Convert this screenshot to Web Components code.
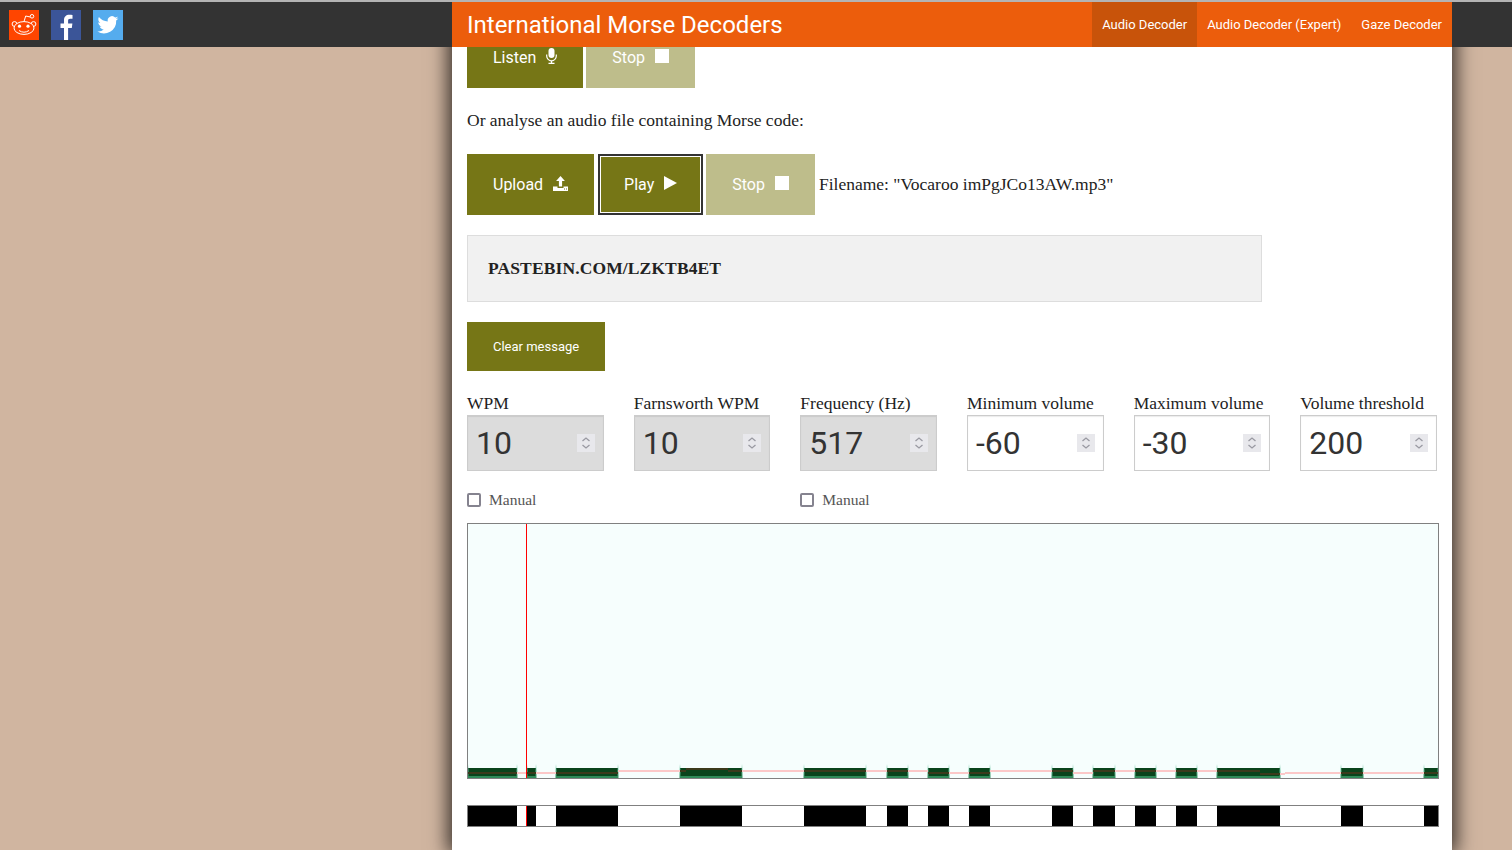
<!DOCTYPE html>
<html lang="en">
<head>
<meta charset="utf-8">
<title>International Morse Decoders</title>
<style>
  html, body { height: 100%; }
  body {
    margin: 0;
    overflow: hidden;
    background: #d0b5a0;
  }
</style>
</head>
<body>
<site-nav>
  <nav-link active>Audio Decoder</nav-link>
  <nav-link>Audio Decoder (Expert)</nav-link>
  <nav-link>Gaze Decoder</nav-link>
</site-nav>
<decoder-page>
  <section-row>
    <olive-button icon="mic">Listen</olive-button>
    <olive-button icon="stop" faded>Stop</olive-button>
  </section-row>
  <p class="lead" slot="lead">Or analyse an audio file containing Morse code:</p>
  <section-row slot="file">
    <olive-button icon="upload">Upload</olive-button>
    <olive-button icon="play" focused>Play</olive-button>
    <olive-button icon="stop" faded>Stop</olive-button>
    <file-name>Filename: "Vocaroo imPgJCo13AW.mp3"</file-name>
  </section-row>
  <message-box slot="message">PASTEBIN.COM/LZKTB4ET</message-box>
  <olive-button slot="clear" small>Clear message</olive-button>
  <settings-grid slot="settings">
    <number-field label="WPM" value="10" disabled manual></number-field>
    <number-field label="Farnsworth WPM" value="10" disabled></number-field>
    <number-field label="Frequency (Hz)" value="517" disabled manual></number-field>
    <number-field label="Minimum volume" value="-60"></number-field>
    <number-field label="Maximum volume" value="-30"></number-field>
    <number-field label="Volume threshold" value="200"></number-field>
  </settings-grid>
  <morse-wave slot="wave"></morse-wave>
</decoder-page>

<script>
const ICONS = {
  mic: '<svg width="11" height="16" viewBox="0 0 11 16"><rect x="2.500" y="0" width="6" height="10" rx="3" fill="#fff"/><path d="M.7 6.500v1.500a4.800 4.800 0 0 0 9.600 0V6.500" fill="none" stroke="#fff" stroke-width="1.200"/><path d="M5.500 13v2M2.500 15.300h6" stroke="#fff" stroke-width="1.300" fill="none"/></svg>',
  stop: '<svg width="14" height="14" viewBox="0 0 14 14"><rect width="14" height="14" fill="#fff"/></svg>',
  play: '<svg width="13" height="14" viewBox="0 0 13 14"><path d="M0 0l13 7-13 7z" fill="#fff"/></svg>',
  upload: '<svg width="15" height="15" viewBox="0 0 15 15"><path d="M7.500 0l4.400 5H9.100v5.500H5.900V5H3.100z" fill="#fff"/><path d="M0 10.500h4.500v1.500h6v-1.500H15V15H0z" fill="#fff"/><path d="M11 13h1M13 13h1" stroke="#767616" stroke-width="1"/></svg>',
};

class SiteNav extends HTMLElement {
  constructor() {
    super();
    this.attachShadow({ mode: 'open' }).innerHTML = `
      <style>
        :host {
          display: block;
          position: fixed;
          z-index: 10;
          top: 0;
          left: 0;
          right: 0;
          height: 47px;
          box-sizing: border-box;
          border-top: 2px solid #b4b4b4;
          background: #333;
          font-family: Roboto, sans-serif;
        }
        .wrap { display: flex; height: 100%; }
        .social {
          width: 452px;
          box-sizing: border-box;
          padding: 8px 0 0 9px;
          display: flex;
          gap: 12px;
          align-items: flex-start;
        }
        .social svg { display: block; }
        .brand {
          width: 1000px;
          background: #ec5d0c;
          display: flex;
          align-items: center;
          justify-content: space-between;
          height: 100%;
        }
        h1 {
          margin: 0 0 0 15px;
          font-size: 24px;
          font-weight: 400;
          color: #fff;
        }
        .links { display: flex; height: 100%; }
      </style>
      <div class="wrap">
        <div class="social">
          <svg width="30" height="30" viewBox="0 0 30 30">
            <rect width="30" height="30" fill="#ff4500"/>
            <g fill="none" stroke="#fff" stroke-width="1">
              <circle cx="5.500" cy="14" r="2.400" fill="#ff4500"/>
              <circle cx="24.500" cy="14" r="2.400" fill="#ff4500"/>
              <ellipse cx="15" cy="18" rx="10" ry="6.400" fill="#ff4500"/>
              <path d="M15 11.600l1.700-5.600 4.600 1"/>
              <circle cx="23" cy="6.300" r="1.800"/>
              <path d="M10 20.500q5 3.400 10 0"/>
            </g>
            <circle cx="10.500" cy="16.200" r="1.600" fill="#fff"/>
            <circle cx="19" cy="16.200" r="1.600" fill="#fff"/>
          </svg>
          <svg width="30" height="30" viewBox="0 0 30 30">
            <rect width="30" height="30" fill="#3b5598"/>
            <path d="M13 30V18H9.500v-4.600H13v-3.300C13 6.600 15.100 4.700 18.300 4.700c1.500 0 2.800.1 3.200.2v3.900h-2.300c-1.700 0-2.100.8-2.100 2v2.600h4.300l-.6 4.600h-3.700V30z" fill="#fff"/>
          </svg>
          <svg width="30" height="30" viewBox="0 0 30 30">
            <rect width="30" height="30" fill="#55acee"/>
            <path d="M25.500 8.200c-.8.350-1.600.6-2.500.7.9-.550 1.600-1.400 1.900-2.400-.850.5-1.800.850-2.750 1.050A4.300 4.300 0 0 0 14.800 11.500c-3.600-.2-6.800-1.900-8.900-4.500-1.150 2-.6 4.500 1.300 5.800-.7 0-1.350-.2-1.950-.550 0 2.100 1.450 3.900 3.450 4.300-.650.170-1.300.2-1.950.070.550 1.700 2.100 2.900 4 3A8.700 8.700 0 0 1 4.400 21.400 12.200 12.200 0 0 0 23.200 10.500c.9-.6 1.650-1.400 2.300-2.300z" fill="#fff"/>
          </svg>
        </div>
        <div class="brand">
          <h1>International Morse Decoders</h1>
          <div class="links"><slot></slot></div>
        </div>
      </div>`;
  }
}

class NavLink extends HTMLElement {
  constructor() {
    super();
    this.attachShadow({ mode: 'open' }).innerHTML = `
      <style>
        :host {
          display: flex;
          align-items: center;
          padding: 0 10px;
          height: 100%;
          font-family: Roboto, sans-serif;
          font-size: 13px;
          color: #fff;
        }
        :host([active]) { background: #c8530a; }
      </style>
      <slot></slot>`;
  }
}

class DecoderPage extends HTMLElement {
  constructor() {
    super();
    this.attachShadow({ mode: 'open' }).innerHTML = `
      <style>
        :host {
          display: block;
          box-sizing: border-box;
          width: 1000px;
          height: 850px;
          margin-left: 452px;
          padding: 27px 15px 0;
          background: #fff;
          box-shadow: 0 0 18px 4px rgba(0, 0, 0, .75);
          color: #222;
        }
        .stack { display: flex; flex-direction: column; align-items: flex-start; }
        ::slotted([slot="lead"]) {
          margin: 22px 0 24px;
          font-family: "Liberation Serif", serif;
          font-size: 17.500px;
          line-height: 20px;
        }
        ::slotted([slot="message"]) { margin-top: 20px; }
        ::slotted([slot="clear"]) { margin-top: 20px; }
        ::slotted([slot="settings"]) { margin-top: 22px; }
        ::slotted([slot="wave"]) { margin-top: 14px; }
      </style>
      <div class="stack">
        <slot></slot>
        <slot name="lead"></slot>
        <slot name="file"></slot>
        <slot name="message"></slot>
        <slot name="clear"></slot>
        <slot name="settings"></slot>
        <slot name="wave"></slot>
      </div>`;
  }
}

class SectionRow extends HTMLElement {
  constructor() {
    super();
    this.attachShadow({ mode: 'open' }).innerHTML = `
      <style>
        :host { display: flex; align-items: center; gap: 3px; }
      </style>
      <slot></slot>`;
  }
}

class OliveButton extends HTMLElement {
  constructor() {
    super();
    const icon = ICONS[this.getAttribute('icon')] || '';
    this.attachShadow({ mode: 'open' }).innerHTML = `
      <style>
        :host {
          display: inline-flex;
          align-items: center;
          gap: 10px;
          box-sizing: border-box;
          height: 61px;
          padding: 0 26px;
          background: #767616;
          color: #fff;
          font-family: Roboto, sans-serif;
          font-size: 16px;
        }
        :host([faded]) { background: #bebd8b; }
        :host([small]) { height: 49px; font-size: 13px; }
        :host([focused]) {
          margin-left: 1px;
          padding: 0 24px;
          outline: 1px solid #fff;
          outline-offset: -3px;
          border: 2px solid #333;
        }
        svg { display: block; margin-top: -3px; }
      </style>
      <slot></slot>${icon}`;
  }
}

class FileName extends HTMLElement {
  constructor() {
    super();
    this.attachShadow({ mode: 'open' }).innerHTML = `
      <style>
        :host {
          display: block;
          margin-left: 1px;
          font-family: "Liberation Serif", serif;
          font-size: 17.500px;
          color: #222;
        }
      </style>
      <slot></slot>`;
  }
}

class MessageBox extends HTMLElement {
  constructor() {
    super();
    this.attachShadow({ mode: 'open' }).innerHTML = `
      <style>
        :host {
          display: flex;
          align-items: center;
          box-sizing: border-box;
          width: 795px;
          height: 67px;
          padding: 0 20px;
          background: #f1f1f1;
          border: 1px solid #ddd;
          font-family: "Liberation Serif", serif;
          font-weight: 700;
          font-size: 17.500px;
          letter-spacing: .12px;
          color: #222;
        }
      </style>
      <slot></slot>`;
  }
}

class SettingsGrid extends HTMLElement {
  constructor() {
    super();
    this.attachShadow({ mode: 'open' }).innerHTML = `
      <style>
        :host {
          display: grid;
          grid-template-columns: repeat(6, 1fr);
          column-gap: 30px;
          width: 970px;
        }
      </style>
      <slot></slot>`;
  }
}

class NumberField extends HTMLElement {
  constructor() {
    super();
    const manual = this.hasAttribute('manual') ? `
      <div class="manual"><span class="box"></span>Manual</div>` : '';
    this.attachShadow({ mode: 'open' }).innerHTML = `
      <style>
        :host {
          display: block;
          height: 116px;
          font-family: "Liberation Serif", serif;
          color: #222;
        }
        .label { font-size: 17.500px; line-height: 20px; margin-bottom: 2px; }
        .input {
          display: flex;
          align-items: center;
          justify-content: space-between;
          box-sizing: border-box;
          height: 56px;
          padding: 0 8px;
          background: #fff;
          border: 1px solid #ccc;
          box-shadow: inset 0 1px 1px rgba(0, 0, 0, .08);
          font-family: Roboto, sans-serif;
          font-size: 32px;
          color: #333;
        }
        :host([disabled]) .input { background: #dcdcdc; }
        .spin { display: block; width: 18px; height: 18px; background: #e8e8ec; }
        .manual {
          display: flex;
          align-items: center;
          gap: 8px;
          margin-top: 20px;
          font-size: 15.500px;
          line-height: 18px;
          color: #555;
        }
        .box {
          box-sizing: border-box;
          width: 14px;
          height: 14px;
          border: 2px solid #85838f;
          border-radius: 2px;
        }
      </style>
      <div class="label">${this.getAttribute('label')}</div>
      <div class="input">
        <span>${this.getAttribute('value')}</span>
        <svg class="spin" viewBox="0 0 18 18"><path d="M5.500 7l3.500-3 3.500 3M5.500 11l3.500 3 3.500-3" fill="none" stroke="#9a9aa2" stroke-width="1.300"/></svg>
      </div>${manual}`;
  }
}

// bar edges read off the reference, in page x
const SPANS = [[468, 517], [527, 536], [556, 618], [680, 742], [804, 866], [887, 908], [928, 949], [969, 990],
  [1052, 1073], [1093, 1115], [1135, 1156], [1176, 1197], [1217, 1280], [1341, 1363], [1424, 1438]];
const LEVELS = [[468, 618, 772], [618, 686, 770], [686, 728, 768], [728, 928, 770], [928, 990, 772],
  [990, 1073, 770], [1073, 1093, 772], [1093, 1260, 770], [1260, 1285, 773], [1285, 1438, 772]];
const ORIGIN = 467;
const CURSOR = 526;

class MorseWave extends HTMLElement {
  constructor() {
    super();
    let wave = '';
    let strip = '';
    SPANS.forEach(([a, b]) => {
      const x = a - ORIGIN;
      const w = b - a;
      wave += `<rect x="${x}" y="245" width="${w}" height="8" fill="#0a441c"/>`;
      wave += `<rect x="${x}" y="253" width="${w}" height="2" fill="#2f8a58"/>`;
      wave += `<rect x="${x - 0.5}" y="241" width="1" height="14" fill="url(#tick)"/>`;
      wave += `<rect x="${x + w - 0.5}" y="241" width="1" height="14" fill="url(#tick)"/>`;
      strip += `<rect x="${x}" y="0" width="${w}" height="20"/>`;
    });
    LEVELS.forEach(([a, b, y]) => {
      wave += `<rect x="${a - ORIGIN}" y="${y - 523}" width="${b - a}" height="2" fill="#fbc8c8"/>`;
      // the level line reads brown where it crosses a bar
      SPANS.forEach(([c, d]) => {
        const from = Math.max(a, c);
        const to = Math.min(b, d);
        if (to > from) {
          wave += `<rect x="${from - ORIGIN}" y="${y - 523}" width="${to - from}" height="2" fill="#3c3a1c"/>`;
        }
      });
    });
    this.attachShadow({ mode: 'open' }).innerHTML = `
      <style>
        :host { display: block; width: 972px; }
        svg { display: block; }
        .wave, .strip { box-sizing: border-box; width: 972px; border: 1px solid #808080; }
        .wave { height: 256px; background: #f6fefd; }
        .strip { height: 22px; margin-top: 26px; background: #fff; }
      </style>
      <div class="wave">
        <svg width="970" height="254" viewBox="1 1 970 254">
          <defs>
            <linearGradient id="tick" x1="0" y1="0" x2="0" y2="1">
              <stop offset="0" stop-color="#5fbf98" stop-opacity="0"/>
              <stop offset=".5" stop-color="#5fbf98"/>
              <stop offset="1" stop-color="#2f8a58"/>
            </linearGradient>
          </defs>
          ${wave}
          <rect x="${CURSOR - ORIGIN}" y="0" width="1" height="256" fill="#f00"/>
        </svg>
      </div>
      <div class="strip">
        <svg width="970" height="20" viewBox="1 0 970 20">
          ${strip}
          <rect x="${CURSOR - ORIGIN}" y="0" width="1" height="20" fill="#f00"/>
        </svg>
      </div>`;
  }
}

customElements.define('site-nav', SiteNav);
customElements.define('nav-link', NavLink);
customElements.define('decoder-page', DecoderPage);
customElements.define('section-row', SectionRow);
customElements.define('olive-button', OliveButton);
customElements.define('file-name', FileName);
customElements.define('message-box', MessageBox);
customElements.define('settings-grid', SettingsGrid);
customElements.define('number-field', NumberField);
customElements.define('morse-wave', MorseWave);
</script>
</body>
</html>
